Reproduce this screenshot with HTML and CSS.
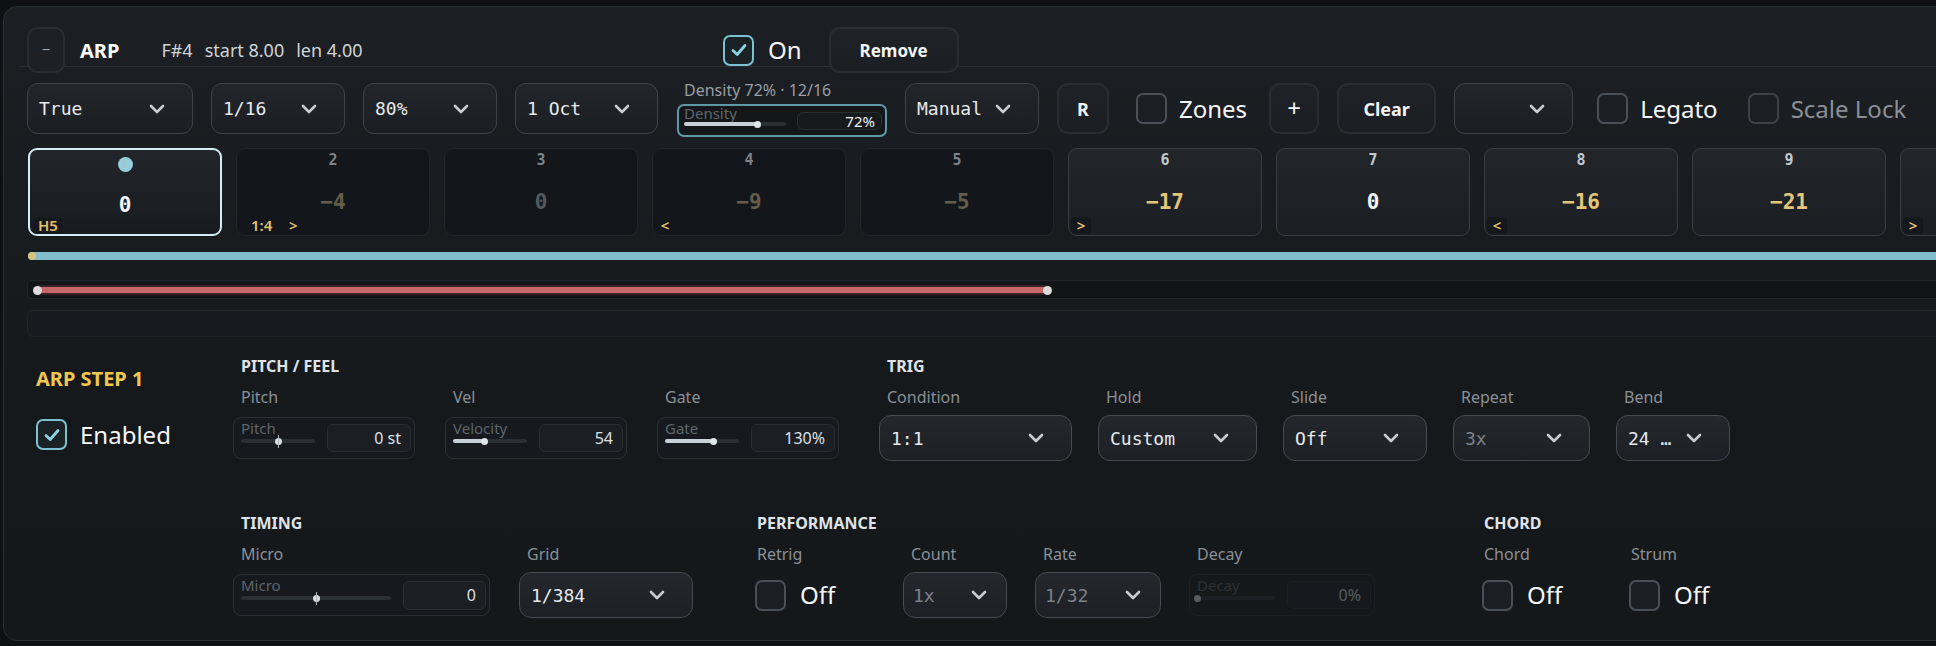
FILE: index.html
```html
<!DOCTYPE html>
<html>
<head>
<meta charset="utf-8">
<title>ARP</title>
<link rel="stylesheet" href="styles.css">
</head>
<body>
<div class="panel">
  <div class="hdr">
    <div class="hdr-left">
      <button class="btn-min">−</button>
      <span class="title">ARP</span>
      <span class="info info-first">F#4</span><span class="info">start 8.00</span><span class="info">len 4.00</span>
    </div>
    <div class="chk-row">
      <span class="cb on"><svg width="20" height="20" viewBox="0 0 20 20"><path d="M4 10.5 L8.2 14.5 L16 5.5" fill="none" stroke="#8ed2e2" stroke-width="2.8" stroke-linecap="round" stroke-linejoin="round"/></svg></span>
      <span class="cb-text">On</span>
    </div>
    <button class="btn remove">Remove</button>
  </div>

  <div class="ctrls">
    <div class="dd w166"><span>True</span><svg class="chev" width="16" height="10" viewBox="0 0 16 10"><polyline points="2,2 8,8 14,2" fill="none" stroke="#c6ccd1" stroke-width="2.6" stroke-linecap="round" stroke-linejoin="round"/></svg></div>
    <div class="dd w134"><span>1/16</span><svg class="chev" width="16" height="10" viewBox="0 0 16 10"><polyline points="2,2 8,8 14,2" fill="none" stroke="#c6ccd1" stroke-width="2.6" stroke-linecap="round" stroke-linejoin="round"/></svg></div>
    <div class="dd w134"><span>80%</span><svg class="chev" width="16" height="10" viewBox="0 0 16 10"><polyline points="2,2 8,8 14,2" fill="none" stroke="#c6ccd1" stroke-width="2.6" stroke-linecap="round" stroke-linejoin="round"/></svg></div>
    <div class="dd w143"><span>1 Oct</span><svg class="chev" width="16" height="10" viewBox="0 0 16 10"><polyline points="2,2 8,8 14,2" fill="none" stroke="#c6ccd1" stroke-width="2.6" stroke-linecap="round" stroke-linejoin="round"/></svg></div>
    <div class="density">
      <div class="density-cap">Density 72% · 12/16</div>
      <div class="slider slider-teal w210">
        <div class="sl-left">
          <span class="sl-lab">Density</span>
          <div class="track"><div class="fill" style="width:72%"><span class="thumb"></span></div></div>
        </div>
        <div class="sl-val">72%</div>
      </div>
    </div>
    <div class="dd w134"><span>Manual</span><svg class="chev" width="16" height="10" viewBox="0 0 16 10"><polyline points="2,2 8,8 14,2" fill="none" stroke="#c6ccd1" stroke-width="2.6" stroke-linecap="round" stroke-linejoin="round"/></svg></div>
    <button class="btn sq w52">R</button>
    <div class="chk-row ml-zones">
      <span class="cb"></span>
      <span class="cb-text tight">Zones</span>
    </div>
    <button class="btn sq w50 ml-plus plus">+</button>
    <button class="btn sq w99">Clear</button>
    <div class="dd w119 dd-empty"><svg class="chev" width="16" height="10" viewBox="0 0 16 10"><polyline points="2,2 8,8 14,2" fill="none" stroke="#c6ccd1" stroke-width="2.6" stroke-linecap="round" stroke-linejoin="round"/></svg></div>
    <div class="chk-row ml-legato">
      <span class="cb"></span>
      <span class="cb-text tight">Legato</span>
    </div>
    <div class="chk-row ml-scale">
      <span class="cb cb-dim"></span>
      <span class="cb-text tight dim">Scale Lock</span>
    </div>
  </div>

  <div class="steps">
    <div class="step sel">
      <span class="idx">1</span>
      <span class="val v-white">0</span>
      <div class="badges"><span class="badge">H5</span></div>
    </div>
    <div class="step off">
      <span class="idx">2</span>
      <span class="val v-olive">−4</span>
      <div class="badges"><span class="badge b-cond">1:4</span><span class="badge">&gt;</span></div>
    </div>
    <div class="step off">
      <span class="idx">3</span>
      <span class="val v-gray">0</span>
    </div>
    <div class="step off">
      <span class="idx">4</span>
      <span class="val v-olive">−9</span>
      <div class="badges"><span class="badge">&lt;</span></div>
    </div>
    <div class="step off">
      <span class="idx">5</span>
      <span class="val v-olive">−5</span>
    </div>
    <div class="step">
      <span class="idx">6</span>
      <span class="val v-yellow">−17</span>
      <div class="badges"><span class="badge">&gt;</span></div>
    </div>
    <div class="step">
      <span class="idx">7</span>
      <span class="val v-white">0</span>
    </div>
    <div class="step">
      <span class="idx">8</span>
      <span class="val v-yellow">−16</span>
      <div class="badges"><span class="badge">&lt;</span></div>
    </div>
    <div class="step">
      <span class="idx">9</span>
      <span class="val v-yellow">−21</span>
    </div>
    <div class="step">
      <div class="badges"><span class="badge">&gt;</span></div>
    </div>
  </div>

  <div class="playbar"><span class="play-dot"></span></div>

  <div class="range">
    <div class="range-bar" style="left:9px;width:1010px"><span class="knob knob-l"></span><span class="knob knob-r"></span></div>
  </div>

  <div class="lane"></div>

  <div class="detail">
    <div class="d-left">
      <div class="d-title">ARP STEP 1</div>
      <div class="chk-row en">
        <span class="cb on"><svg width="20" height="20" viewBox="0 0 20 20"><path d="M4 10.5 L8.2 14.5 L16 5.5" fill="none" stroke="#8ed2e2" stroke-width="2.8" stroke-linecap="round" stroke-linejoin="round"/></svg></span>
        <span class="cb-text">Enabled</span>
      </div>
    </div>
    <div class="d-main">
      <div class="d-row">
        <section class="sec sec-pitch">
          <div class="sec-h">PITCH / FEEL</div>
          <div class="fields g30">
            <div class="field">
              <div class="f-lab">Pitch</div>
              <div class="f-ctl">
                <div class="slider w182">
                  <div class="sl-left"><span class="sl-lab">Pitch</span><div class="track"><span class="ctr-thumb" style="left:50%"></span></div></div>
                  <div class="sl-val">0 st</div>
                </div>
              </div>
            </div>
            <div class="field">
              <div class="f-lab">Vel</div>
              <div class="f-ctl">
                <div class="slider w182">
                  <div class="sl-left"><span class="sl-lab">Velocity</span><div class="track"><div class="fill" style="width:42%"><span class="thumb"></span></div></div></div>
                  <div class="sl-val">54</div>
                </div>
              </div>
            </div>
            <div class="field">
              <div class="f-lab">Gate</div>
              <div class="f-ctl">
                <div class="slider w182">
                  <div class="sl-left"><span class="sl-lab">Gate</span><div class="track"><div class="fill" style="width:65%"><span class="thumb"></span></div></div></div>
                  <div class="sl-val">130%</div>
                </div>
              </div>
            </div>
          </div>
        </section>
        <section class="sec sec-trig">
          <div class="sec-h">TRIG</div>
          <div class="fields g26">
            <div class="field">
              <div class="f-lab">Condition</div>
              <div class="f-ctl"><div class="dd dd-s w193"><span>1:1</span><svg class="chev" width="16" height="10" viewBox="0 0 16 10"><polyline points="2,2 8,8 14,2" fill="none" stroke="#c6ccd1" stroke-width="2.6" stroke-linecap="round" stroke-linejoin="round"/></svg></div></div>
            </div>
            <div class="field">
              <div class="f-lab">Hold</div>
              <div class="f-ctl"><div class="dd dd-s w159"><span>Custom</span><svg class="chev" width="16" height="10" viewBox="0 0 16 10"><polyline points="2,2 8,8 14,2" fill="none" stroke="#c6ccd1" stroke-width="2.6" stroke-linecap="round" stroke-linejoin="round"/></svg></div></div>
            </div>
            <div class="field">
              <div class="f-lab">Slide</div>
              <div class="f-ctl"><div class="dd dd-s w144"><span>Off</span><svg class="chev" width="16" height="10" viewBox="0 0 16 10"><polyline points="2,2 8,8 14,2" fill="none" stroke="#c6ccd1" stroke-width="2.6" stroke-linecap="round" stroke-linejoin="round"/></svg></div></div>
            </div>
            <div class="field">
              <div class="f-lab">Repeat</div>
              <div class="f-ctl"><div class="dd dd-s w137"><span class="dim-val">3x</span><svg class="chev" width="16" height="10" viewBox="0 0 16 10"><polyline points="2,2 8,8 14,2" fill="none" stroke="#c6ccd1" stroke-width="2.6" stroke-linecap="round" stroke-linejoin="round"/></svg></div></div>
            </div>
            <div class="field">
              <div class="f-lab">Bend</div>
              <div class="f-ctl"><div class="dd dd-s w114"><span>24 …</span><svg class="chev" width="16" height="10" viewBox="0 0 16 10"><polyline points="2,2 8,8 14,2" fill="none" stroke="#c6ccd1" stroke-width="2.6" stroke-linecap="round" stroke-linejoin="round"/></svg></div></div>
            </div>
          </div>
        </section>
      </div>

      <div class="d-row row2">
        <section class="sec sec-timing">
          <div class="sec-h">TIMING</div>
          <div class="fields g29">
            <div class="field">
              <div class="f-lab">Micro</div>
              <div class="f-ctl">
                <div class="slider w257">
                  <div class="sl-left"><span class="sl-lab">Micro</span><div class="track"><span class="ctr-thumb" style="left:50%"></span></div></div>
                  <div class="sl-val w83">0</div>
                </div>
              </div>
            </div>
            <div class="field">
              <div class="f-lab">Grid</div>
              <div class="f-ctl"><div class="dd dd-s w174"><span>1/384</span><svg class="chev" width="16" height="10" viewBox="0 0 16 10"><polyline points="2,2 8,8 14,2" fill="none" stroke="#c6ccd1" stroke-width="2.6" stroke-linecap="round" stroke-linejoin="round"/></svg></div></div>
            </div>
          </div>
        </section>
        <section class="sec sec-perf">
          <div class="sec-h">PERFORMANCE</div>
          <div class="fields g28">
            <div class="field w126">
              <div class="f-lab">Retrig</div>
              <div class="f-ctl"><div class="chk-row cbf"><span class="cb"></span><span class="cb-text">Off</span></div></div>
            </div>
            <div class="field">
              <div class="f-lab">Count</div>
              <div class="f-ctl"><div class="dd dd-s w104 dd-narrow"><span class="dim-val">1x</span><svg class="chev" width="16" height="10" viewBox="0 0 16 10"><polyline points="2,2 8,8 14,2" fill="none" stroke="#c6ccd1" stroke-width="2.6" stroke-linecap="round" stroke-linejoin="round"/></svg></div></div>
            </div>
            <div class="field">
              <div class="f-lab">Rate</div>
              <div class="f-ctl"><div class="dd dd-s w126 dd-narrow"><span class="dim-val">1/32</span><svg class="chev" width="16" height="10" viewBox="0 0 16 10"><polyline points="2,2 8,8 14,2" fill="none" stroke="#c6ccd1" stroke-width="2.6" stroke-linecap="round" stroke-linejoin="round"/></svg></div></div>
            </div>
            <div class="field">
              <div class="f-lab">Decay</div>
              <div class="f-ctl">
                <div class="slider w186 disabled">
                  <div class="sl-left"><span class="sl-lab">Decay</span><div class="track"><div class="fill" style="width:0%"><span class="thumb"></span></div></div></div>
                  <div class="sl-val">0%</div>
                </div>
              </div>
            </div>
          </div>
        </section>
        <section class="sec sec-chord">
          <div class="sec-h">CHORD</div>
          <div class="fields g28">
            <div class="field w119">
              <div class="f-lab">Chord</div>
              <div class="f-ctl"><div class="chk-row cbf"><span class="cb"></span><span class="cb-text">Off</span></div></div>
            </div>
            <div class="field">
              <div class="f-lab">Strum</div>
              <div class="f-ctl"><div class="chk-row cbf"><span class="cb"></span><span class="cb-text">Off</span></div></div>
            </div>
          </div>
        </section>
      </div>
    </div>
  </div>
</div>
</body>
</html>
```

FILE: styles.css
```css
* { box-sizing: border-box; }
html, body { margin: 0; padding: 0; }
body {
  width: 1936px;
  height: 646px;
  overflow: hidden;
  background: #0e1013;
  font-family: "Noto Sans", "Open Sans", sans-serif;
  color: #eef1f3;
}
button { font-family: inherit; cursor: default; }

.panel {
  margin: 6px 0 0 3px;
  width: 2040px;
  height: 635px;
  border: 1px solid #2a2f34;
  border-radius: 14px;
  background: linear-gradient(#1c1f23, #16191c 60%, #15181b);
  padding: 20px 24px 0 23px;
}

/* header */
.hdr {
  position: relative;
  display: flex;
  align-items: center;
  height: 46px;
  margin-left: -8px;
  padding-left: 8px;
}
.hdr::after {
  content: "";
  position: absolute;
  left: 0; right: 0; top: 39px;
  height: 1px;
  background: #2a2f34;
}
.hdr-left { display: flex; align-items: center; width: 696px; flex: none; }
.btn-min {
  position: relative;
  z-index: 1;
  width: 38px; height: 46px;
  border: 2px solid #2a2e33;
  border-radius: 10px;
  background: #1d2024;
  color: #9ba1a7;
  font-size: 15px;
  padding: 0 0 3px;
}
.title { margin-left: 15px; font-weight: 700; font-size: 20px; color: #fff; }
.info { font-size: 18px; color: #d0d4d8; margin-left: 12px; }
.info-first { margin-left: 42px; }

.btn {
  height: 51px;
  border: 2px solid #2a2e33;
  border-radius: 11px;
  background: linear-gradient(#1f2226, #1b1e22);
  color: #f2f4f6;
  font-weight: 700;
  font-size: 18px;
  padding: 0;
  flex: none;
}
.remove {
  position: relative;
  z-index: 1;
  width: 130px; height: 46px;
  margin-left: 27px;
  font-size: 17px;
}
.plus { font-weight: 400; font-size: 24px; padding-bottom: 2px; }

/* checkbox */
.chk-row { display: flex; align-items: center; flex: none; }
.cb {
  width: 31px; height: 31px;
  border: 2px solid #4a5057;
  border-radius: 7px;
  background: #1b1e22;
  display: flex; align-items: center; justify-content: center;
  flex: none;
}
.cb.on { border-color: #7cc1d1; background: #1a2226; }
.cb-dim { border-color: #3d4248; }
.cb-text { margin-left: 14px; font-size: 24px; color: #f4f6f8; line-height: 30px; }
.cb-text.tight { margin-left: 12px; }
.cb-text.dim { color: #8a9096; }

/* control row */
.ctrls {
  display: flex;
  align-items: center;
  gap: 18px;
  height: 57px;
  margin-top: 7px;
}
.dd {
  height: 51px;
  border: 1.5px solid #3e444a;
  border-radius: 11px;
  background: linear-gradient(#22262a, #1b1e22);
  display: flex;
  align-items: center;
  justify-content: space-between;
  padding: 0 27px 0 11px;
  font-family: "DejaVu Sans Mono", "Liberation Mono", monospace;
  font-size: 18px;
  color: #e6eaed;
  flex: none;
}
.dd-empty { justify-content: flex-end; }
.dd-s {
  height: 46px;
  border-radius: 12px;
  border-color: #454b51;
  background: linear-gradient(#24282d, #1d2024);
  padding-left: 11px;
}
.dd-narrow { padding-left: 9px; padding-right: 19px; }
.dim-val { color: #7c8288; }
.chev { flex: none; }

.w52 { width: 52px; }
.w50 { width: 50px; }
.w99 { width: 99px; }
.w83 { width: 83px !important; }
.w104 { width: 104px; }
.w114 { width: 114px; }
.w119 { width: 119px; }
.w126 { width: 126px; }
.w134 { width: 134px; }
.w137 { width: 137px; }
.w143 { width: 143px; }
.w144 { width: 144px; }
.w159 { width: 159px; }
.w166 { width: 166px; }
.w174 { width: 174px; }
.w182 { width: 182px; }
.w186 { width: 186px; }
.w193 { width: 193px; }
.w210 { width: 210px; }
.w257 { width: 257px; }

.ml-zones { margin-left: 9px; }
.ml-plus { margin-left: 4px; }
.ml-legato { margin-left: 6px; }
.ml-scale { margin-left: 12px; }

/* density */
.density { display: flex; flex-direction: column; flex: none; margin-left: 1px; }
.density-cap { font-size: 16px; color: #989ea4; line-height: 20px; padding-left: 7px; margin-bottom: 4px; }

/* slider */
.slider {
  display: flex;
  align-items: center;
  height: 42px;
  border: 1.5px solid #2b3035;
  border-radius: 8px;
  padding: 0 3px 0 7px;
  background: #16191d;
  flex: none;
}
.slider-teal {
  height: 33px;
  border: 2px solid #5f98a7;
  border-radius: 7px;
  background: #14171a;
  padding-left: 5px;
}
.sl-left { flex: 1; align-self: stretch; display: flex; flex-direction: column; padding-top: 2px; min-width: 0; }
.slider-teal .sl-left { padding-top: 0; }
.sl-lab { font-size: 15px; color: #5e656b; line-height: 16px; white-space: nowrap; }
.slider-teal .sl-lab { line-height: 15px; }
.track {
  position: relative;
  height: 4px;
  margin-top: 3px;
  background: #2a2f34;
  border-radius: 2px;
}
.slider-teal .track { margin-top: 1px; }
.fill { position: relative; height: 100%; background: #c7d0d6; border-radius: 2px; }
.thumb {
  position: absolute;
  right: -3.5px; top: -1.5px;
  width: 7px; height: 7px;
  border-radius: 50%;
  background: #e0e6ea;
}
.ctr-thumb {
  position: absolute;
  top: -1.5px;
  margin-left: -3.5px;
  width: 7px; height: 7px;
  border-radius: 50%;
  background: #d8dee2;
}
.ctr-thumb::before {
  content: "";
  position: absolute;
  left: 3px; top: -3px;
  width: 1px; height: 13px;
  background: #aeb6bc;
}
.sl-val {
  width: 84px;
  height: 28px;
  margin-left: 12px;
  border: 1px solid #2a2e33;
  border-radius: 6px;
  background: #1b1e22;
  display: flex;
  align-items: center;
  justify-content: flex-end;
  padding-right: 9px;
  font-size: 16px;
  color: #dde1e5;
  flex: none;
}
.slider-teal .sl-val { width: 85px; height: 18px; margin-left: 11px; background: #171a1d; font-size: 15px; color: #eef1f3; padding-right: 6px; }
.w257 .sl-val { height: 29px; }
.disabled { opacity: 0.32; }

/* steps */
.steps { display: flex; gap: 14px; margin-top: 11px; margin-left: 1px; }
.step {
  position: relative;
  flex: none;
  width: 194px; height: 88px;
  border-radius: 9px;
  border: 1.5px solid #393e44;
  background: linear-gradient(#22262b, #1b1e22);
  display: flex;
  flex-direction: column;
  align-items: center;
  font-family: "DejaVu Sans Mono", "Liberation Mono", monospace;
}
.step.off { border-color: #22262b; background: #13161a; }
.step.sel { border: 2px solid #d4ecf2; background: linear-gradient(#22262b, #181b1f); }
.idx {
  margin-top: 3px;
  font-size: 15px;
  font-weight: 700;
  line-height: 17px;
  color: #c3c9ce;
}
.step.off .idx { color: #7b8288; }
.step.sel .idx {
  margin-top: 7px;
  width: 15px; height: 15px;
  border-radius: 50%;
  background: #94cddc;
  color: #a9c3cb;
  font-size: 10px;
  line-height: 15px;
  text-align: center;
}
.val { margin-top: 21px; font-size: 21px; font-weight: 700; line-height: 24px; }
.step.sel .val { margin-top: 21px; }
.v-white { color: #f3f5f7; }
.v-olive { color: #645e48; }
.v-gray { color: #53595e; }
.v-yellow { color: #e4c679; }
.badges {
  position: absolute;
  left: 2px; bottom: 1px;
  display: flex;
  gap: 6px;
}
.step.sel .badges { left: 3px; bottom: 0; }
.badge {
  font-family: "Noto Sans", sans-serif;
  font-size: 15px;
  font-weight: 600;
  line-height: 17px;
  color: #e2c16b;
  background: #15181c;
  border-radius: 4px;
  padding: 0 5px;
  min-width: 20px;
  text-align: center;
}
.step.off .badge { background: #13161a; }
.b-cond { margin-left: 7px; }

/* bars */
.playbar {
  position: relative;
  margin-top: 16px;
  margin-left: 1px;
  height: 8px;
  background: #85bccb;
  border-radius: 4px 0 0 4px;
}
.play-dot {
  position: absolute;
  left: 0; top: 0;
  width: 8px; height: 8px;
  border-radius: 50%;
  background: #d9c27b;
}
.range {
  position: relative;
  margin-top: 20px;
  height: 19px;
  border: 1px solid #22262b;
  border-radius: 4px;
  background: #121518;
}
.range-bar {
  position: absolute;
  top: 6px;
  height: 6px;
  background: #c86767;
  border-radius: 3px;
  box-shadow: 0 0 0 2px #3a2328;
}
.knob {
  position: absolute;
  top: -1.5px;
  width: 9px; height: 9px;
  border-radius: 50%;
  background: #dcdcdc;
}
.knob-l { left: -4.5px; }
.knob-r { right: -4.5px; }
.lane {
  margin-top: 11px;
  height: 27px;
  border: 1px solid #22262b;
  border-radius: 6px;
  background: #171a1e;
}

/* detail */
.detail { display: flex; margin-top: 19px; }
.d-left { width: 206px; flex: none; padding-left: 9px; padding-top: 11px; }
.d-title { font-size: 20px; font-weight: 700; color: #f0c850; line-height: 24px; }
.chk-row.en { margin-top: 28px; }
.chk-row.en .cb-text { margin-left: 13px; }
.d-main { display: flex; flex-direction: column; }
.d-row { display: flex; }
.row2 { margin-top: 52px; }
.sec-trig { margin-left: 40px; }
.sec-perf { margin-left: 56px; }
.sec-chord { margin-left: 101px; }
.sec-h {
  font-size: 16px;
  font-weight: 700;
  line-height: 20px;
  color: #dfe3e7;
  padding-left: 8px;
  margin-bottom: 11px;
}
.fields { display: flex; }
.g26 { gap: 26px; }
.g28 { gap: 28px; }
.g29 { gap: 29px; }
.g30 { gap: 30px; }
.field { display: flex; flex-direction: column; flex: none; }
.f-lab { font-size: 16px; line-height: 20px; color: #8a9096; padding-left: 8px; margin-bottom: 8px; }
.f-ctl { height: 46px; display: flex; align-items: center; }
.cbf { margin-left: 6px; }
```
